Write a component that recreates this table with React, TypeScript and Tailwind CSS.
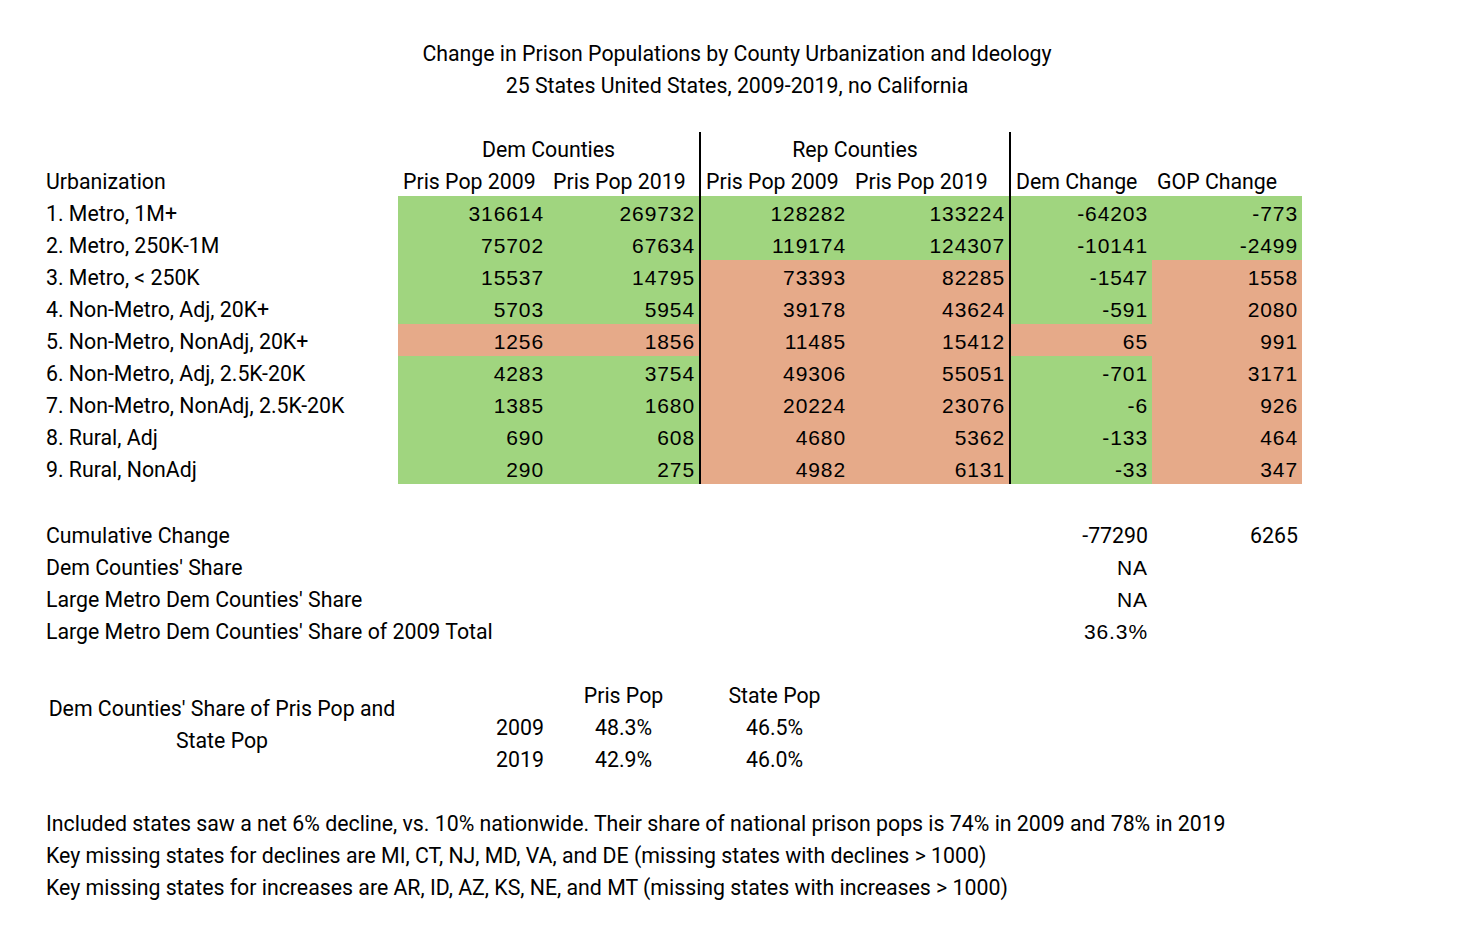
import React from "react";

type C = "g" | "o";
const rows: [string, number, number, number, number, number, number, C, C, C, C][] = [
  ["1. Metro, 1M+", 316614, 269732, 128282, 133224, -64203, -773, "g", "g", "g", "g"],
  ["2. Metro, 250K-1M", 75702, 67634, 119174, 124307, -10141, -2499, "g", "g", "g", "g"],
  ["3. Metro, < 250K", 15537, 14795, 73393, 82285, -1547, 1558, "g", "o", "g", "o"],
  ["4. Non-Metro, Adj, 20K+", 5703, 5954, 39178, 43624, -591, 2080, "g", "o", "g", "o"],
  ["5. Non-Metro, NonAdj, 20K+", 1256, 1856, 11485, 15412, 65, 991, "o", "o", "o", "o"],
  ["6. Non-Metro, Adj, 2.5K-20K", 4283, 3754, 49306, 55051, -701, 3171, "g", "o", "g", "o"],
  ["7. Non-Metro, NonAdj, 2.5K-20K", 1385, 1680, 20224, 23076, -6, 926, "g", "o", "g", "o"],
  ["8. Rural, Adj", 690, 608, 4680, 5362, -133, 464, "g", "o", "g", "o"],
  ["9. Rural, NonAdj", 290, 275, 4982, 6131, -33, 347, "g", "o", "g", "o"],
];

const grid = "grid grid-cols-[352px_150px_151px_151px_159px_143px_150px]";
const txt = "font-['Roboto',sans-serif]";
const num = "font-['Liberation_Sans',Arial,sans-serif] text-[21px] tracking-[0.9px]";
const row = "h-[32px] flex items-center pt-[4px] whitespace-nowrap";
const numRow = "h-[32px] flex items-center pt-[2px] whitespace-nowrap";

function Num({ v, c, border }: { v: number; c: C; border?: boolean }) {
  return (
    <div
      className={`${numRow} justify-end pr-[4px] ${num} ${
        c === "g" ? "bg-[#a0d57f]" : "bg-[#e6aa89]"
      } ${border ? "border-l-2 border-black" : ""}`}
    >
      {v}
    </div>
  );
}

function Head({ t, border }: { t: string; border?: boolean }) {
  return (
    <div className={`${row} pl-[5px] ${border ? "border-l-2 border-black" : ""}`}>{t}</div>
  );
}

export default function App() {
  return (
    <div className={`w-[1470px] h-[928px] bg-white text-black text-[21.3px] leading-none ${txt} pt-[38px]`}>
      <div className="flex flex-col items-center pl-[4px]">
        <div className="h-[32px] flex items-center">Change in Prison Populations by County Urbanization and Ideology</div>
        <div className="h-[32px] flex items-center">25 States United States, 2009-2019, no California</div>
      </div>
      <div className="h-[30px]" />
      <div className={`${grid} pl-[46px]`}>
        {/* header row 1 */}
        <div className="h-[32px]" />
        <div className={`col-span-2 ${row} justify-center`}>Dem Counties</div>
        <div className={`col-span-2 ${row} justify-center border-l-2 border-black`}>Rep Counties</div>
        <div className="col-span-2 h-[32px] border-l-2 border-black" />
        {/* header row 2 */}
        <div className={row}>Urbanization</div>
        <Head t="Pris Pop 2009" />
        <Head t="Pris Pop 2019" />
        <Head t="Pris Pop 2009" border />
        <Head t="Pris Pop 2019" />
        <Head t="Dem Change" border />
        <Head t="GOP Change" />
        {rows.map((r) => (
          <React.Fragment key={r[0]}>
            <div className={row}>{r[0]}</div>
            <Num v={r[1]} c={r[7]} />
            <Num v={r[2]} c={r[7]} />
            <Num v={r[3]} c={r[8]} border />
            <Num v={r[4]} c={r[8]} />
            <Num v={r[5]} c={r[9]} border />
            <Num v={r[6]} c={r[10]} />
          </React.Fragment>
        ))}
      </div>
      <div className="h-[34px]" />
      <div className={`${grid} pl-[46px]`}>
        <div className={row}>Cumulative Change</div>
        <div className="col-span-4" />
        <div className={`${row} justify-end pr-[4px]`}>-77290</div>
        <div className={`${row} justify-end pr-[4px]`}>6265</div>

        <div className={row}>Dem Counties' Share</div>
        <div className="col-span-4" />
        <div className={`${numRow} justify-end pr-[4px] ${num}`}>NA</div>
        <div />

        <div className={row}>Large Metro Dem Counties' Share</div>
        <div className="col-span-4" />
        <div className={`${numRow} justify-end pr-[4px] ${num}`}>NA</div>
        <div />

        <div className={row}>Large Metro Dem Counties' Share of 2009 Total</div>
        <div className="col-span-4" />
        <div className={`${numRow} justify-end pr-[4px] ${num}`}>36.3%</div>
        <div />
      </div>
      <div className="h-[32px]" />
      <div className={`${grid} pl-[46px]`}>
        <div className="row-span-3 flex flex-col justify-center items-center text-center leading-[32px] pb-[2px]">
          <span className="whitespace-nowrap">Dem Counties' Share of Pris Pop and</span>
          <span>State Pop</span>
        </div>
        <div className="h-[32px]" />
        <div className={`${row} justify-center`}>Pris Pop</div>
        <div className={`${row} justify-center`}>State Pop</div>
        <div className="col-span-3" />

        <div className={`${row} justify-end pr-[4px]`}>2009</div>
        <div className={`${row} justify-center`}>48.3%</div>
        <div className={`${row} justify-center`}>46.5%</div>
        <div className="col-span-3" />

        <div className={`${row} justify-end pr-[4px]`}>2019</div>
        <div className={`${row} justify-center`}>42.9%</div>
        <div className={`${row} justify-center`}>46.0%</div>
        <div className="col-span-3" />
      </div>
      <div className="h-[32px]" />
      <div className="pl-[46px]">
        <div className={row}>
          Included states saw a net 6% decline, vs. 10% nationwide. Their share of national prison pops is 74% in 2009 and 78% in 2019
        </div>
        <div className={row}>
          Key missing states for declines are MI, CT, NJ, MD, VA, and DE (missing states with declines &gt; 1000)
        </div>
        <div className={row}>
          Key missing states for increases are AR, ID, AZ, KS, NE, and MT (missing states with increases &gt; 1000)
        </div>
      </div>
    </div>
  );
}
